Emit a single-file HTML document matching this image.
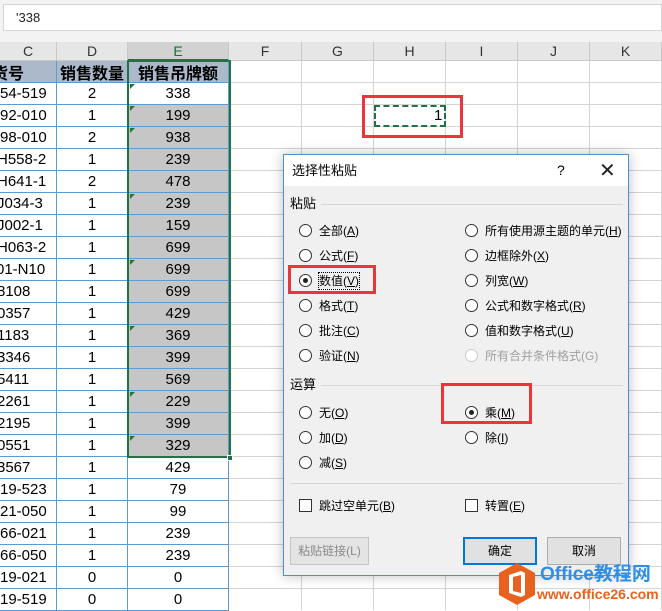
<!DOCTYPE html>
<html><head><meta charset="utf-8">
<style>
*{margin:0;padding:0;box-sizing:border-box}
body{width:662px;height:610px;overflow:hidden;background:#fff;position:relative;font-family:"Liberation Sans","Noto Sans CJK SC",sans-serif;color:#000}
.a{position:absolute}
.fb{left:0;top:0;width:662px;height:42px;background:#f3f3f3}
.fbox{left:3px;top:4px;width:659px;height:27px;background:#fff;border:1px solid #d4d4d4;font-size:13px;line-height:25px;padding-left:12px;color:#222}
.ch{top:42px;height:19px;background:#e6e6e6;border-right:1px solid #c8c8c8;border-bottom:1px solid #c8c8c8;font-size:14px;text-align:center;line-height:19px;color:#333}
.vl{top:61px;width:1px;height:549px;background:#d4d4d4}
.hl{left:229px;width:433px;height:1px;background:#d4d4d4}
.cell{height:22px;line-height:22px;font-size:15px;border-bottom:1px solid #5b9bd5;white-space:nowrap;overflow:hidden}
.c{left:0;width:57px;border-right:1px solid #5b9bd5}
.d{left:57px;width:71px;text-align:center;border-right:1px solid #5b9bd5}
.e{left:128px;width:101px;text-align:center;border-right:1px solid #5b9bd5}
.g{background:#c6c6c6}
.t{position:absolute;left:2px;top:1px;width:0;height:0;border-top:5px solid #1d7a2e;border-right:5px solid transparent}
.hdr{top:61px;height:22px;background:#acb9ca;font-weight:bold;font-size:16px;line-height:22px;border-bottom:1px solid #5b9bd5;border-right:1px solid #5b9bd5;white-space:nowrap;overflow:hidden;font-family:"Noto Sans CJK SC",sans-serif}
.dlg{left:283px;top:154px;width:346px;height:422px;background:#f0f0f0;border:1px solid #4a90d9;box-shadow:0 0 12px rgba(0,0,0,.25);font-size:12px;font-family:"Liberation Sans","Noto Sans CJK SC",sans-serif}
.r{width:13px;height:13px;border:1px solid #333;border-radius:50%;background:#fff}
.r.on::after{content:"";position:absolute;left:3px;top:3px;width:5px;height:5px;border-radius:50%;background:#222}
.cb{width:13px;height:13px;border:1px solid #333;background:#fff}
.lb{font-size:12px;line-height:16px;white-space:nowrap}
u{text-decoration:underline}
.btn{height:28px;border:1px solid #adadad;background:#e1e1e1;text-align:center;line-height:26px;font-size:12px}
</style></head><body>
<div class="a fb"></div>
<div class="a fbox">'338</div>
<div class="a ch" style="left:0;width:57px">C</div>
<div class="a ch" style="left:57px;width:71px">D</div>
<div class="a ch" style="left:128px;width:101px;background:#d2d2d2;color:#1d6b3a;border-bottom:2px solid #217346">E</div>
<div class="a ch" style="left:229px;width:73px">F</div>
<div class="a ch" style="left:302px;width:72px">G</div>
<div class="a ch" style="left:374px;width:72px">H</div>
<div class="a ch" style="left:446px;width:72px">I</div>
<div class="a ch" style="left:518px;width:72px">J</div>
<div class="a ch" style="left:590px;width:72px">K</div>
<div class="a vl" style="left:301px"></div><div class="a vl" style="left:373px"></div><div class="a vl" style="left:445px"></div><div class="a vl" style="left:517px"></div><div class="a vl" style="left:589px"></div><div class="a vl" style="left:661px"></div>
<div class="a hl" style="top:82px"></div><div class="a hl" style="top:104px"></div><div class="a hl" style="top:126px"></div><div class="a hl" style="top:148px"></div><div class="a hl" style="top:170px"></div><div class="a hl" style="top:192px"></div><div class="a hl" style="top:214px"></div><div class="a hl" style="top:236px"></div><div class="a hl" style="top:258px"></div><div class="a hl" style="top:280px"></div><div class="a hl" style="top:302px"></div><div class="a hl" style="top:324px"></div><div class="a hl" style="top:346px"></div><div class="a hl" style="top:368px"></div><div class="a hl" style="top:390px"></div><div class="a hl" style="top:412px"></div><div class="a hl" style="top:434px"></div><div class="a hl" style="top:456px"></div><div class="a hl" style="top:478px"></div><div class="a hl" style="top:500px"></div><div class="a hl" style="top:522px"></div><div class="a hl" style="top:544px"></div><div class="a hl" style="top:566px"></div><div class="a hl" style="top:588px"></div>

<div class="a hdr" style="left:0;width:57px;text-indent:-8px">货号</div>
<div class="a hdr" style="left:57px;width:71px;text-align:center">销售数量</div>
<div class="a hdr" style="left:128px;width:101px;text-align:center">销售吊牌额</div>

<div class="a" style="left:0;top:83px;width:229px">
<div style="position:relative;height:22px"><div class="a cell c">54-519</div><div class="a cell d">2</div><div class="a cell e"><i class="t"></i>338</div></div>
<div style="position:relative;height:22px"><div class="a cell c">92-010</div><div class="a cell d">1</div><div class="a cell e g"><i class="t"></i>199</div></div>
<div style="position:relative;height:22px"><div class="a cell c">98-010</div><div class="a cell d">2</div><div class="a cell e g"><i class="t"></i>938</div></div>
<div style="position:relative;height:22px"><div class="a cell c" style="text-indent:-3px">H558-2</div><div class="a cell d">1</div><div class="a cell e g">239</div></div>
<div style="position:relative;height:22px"><div class="a cell c" style="text-indent:-3px">H641-1</div><div class="a cell d">2</div><div class="a cell e g">478</div></div>
<div style="position:relative;height:22px"><div class="a cell c" style="text-indent:-3px">J034-3</div><div class="a cell d">1</div><div class="a cell e g"><i class="t"></i>239</div></div>
<div style="position:relative;height:22px"><div class="a cell c" style="text-indent:-3px">J002-1</div><div class="a cell d">1</div><div class="a cell e g">159</div></div>
<div style="position:relative;height:22px"><div class="a cell c" style="text-indent:-3px">H063-2</div><div class="a cell d">1</div><div class="a cell e g">699</div></div>
<div style="position:relative;height:22px"><div class="a cell c" style="text-indent:-4px">01-N10</div><div class="a cell d">1</div><div class="a cell e g"><i class="t"></i>699</div></div>
<div style="position:relative;height:22px"><div class="a cell c" style="text-indent:-3px">8108</div><div class="a cell d">1</div><div class="a cell e g">699</div></div>
<div style="position:relative;height:22px"><div class="a cell c" style="text-indent:-3px">0357</div><div class="a cell d">1</div><div class="a cell e g">429</div></div>
<div style="position:relative;height:22px"><div class="a cell c" style="text-indent:-3px">1183</div><div class="a cell d">1</div><div class="a cell e g"><i class="t"></i>369</div></div>
<div style="position:relative;height:22px"><div class="a cell c" style="text-indent:-3px">3346</div><div class="a cell d">1</div><div class="a cell e g">399</div></div>
<div style="position:relative;height:22px"><div class="a cell c" style="text-indent:-3px">5411</div><div class="a cell d">1</div><div class="a cell e g">569</div></div>
<div style="position:relative;height:22px"><div class="a cell c" style="text-indent:-3px">2261</div><div class="a cell d">1</div><div class="a cell e g"><i class="t"></i>229</div></div>
<div style="position:relative;height:22px"><div class="a cell c" style="text-indent:-3px">2195</div><div class="a cell d">1</div><div class="a cell e g">399</div></div>
<div style="position:relative;height:22px"><div class="a cell c" style="text-indent:-3px">0551</div><div class="a cell d">1</div><div class="a cell e g"><i class="t"></i>329</div></div>
<div style="position:relative;height:22px"><div class="a cell c" style="text-indent:-3px">3567</div><div class="a cell d">1</div><div class="a cell e">429</div></div>
<div style="position:relative;height:22px"><div class="a cell c">19-523</div><div class="a cell d">1</div><div class="a cell e">79</div></div>
<div style="position:relative;height:22px"><div class="a cell c">21-050</div><div class="a cell d">1</div><div class="a cell e">99</div></div>
<div style="position:relative;height:22px"><div class="a cell c">66-021</div><div class="a cell d">1</div><div class="a cell e">239</div></div>
<div style="position:relative;height:22px"><div class="a cell c">66-050</div><div class="a cell d">1</div><div class="a cell e">239</div></div>
<div style="position:relative;height:22px"><div class="a cell c">19-021</div><div class="a cell d">0</div><div class="a cell e">0</div></div>
<div style="position:relative;height:22px"><div class="a cell c">19-519</div><div class="a cell d">0</div><div class="a cell e">0</div></div>
</div>
<div class="a" style="left:127px;top:60px;width:104px;height:398px;border:2px solid #217346"></div>
<div class="a" style="left:227px;top:455px;width:6px;height:6px;background:#217346;border:1px solid #fff"></div>

<div class="a" style="left:374px;top:105px;width:72px;height:22px;border:2px dashed #217346"></div>
<div class="a" style="left:434px;top:106px;font-size:15px;line-height:20px">1</div>
<div class="a" style="left:362px;top:95px;width:101px;height:43px;border:3px solid #e8363d"></div>

<div class="a dlg">
 <div class="a" style="left:0;top:0;width:344px;height:31px;background:#fff"></div>
 <div class="a lb" style="left:8px;top:8px;font-size:13px">选择性粘贴</div>
 <div class="a" style="left:273px;top:7px;font-size:14px">?</div>
 <div class="a" style="left:315px;top:3px;font-size:20px;font-weight:300;color:#222">✕</div>
 <div class="a lb" style="left:6px;top:41px;font-size:13px">粘贴</div>
 <div class="a" style="left:37px;top:49px;width:302px;height:1px;background:#d6d6d6"></div>

 <div class="a r" style="left:15px;top:69px"></div><div class="a lb" style="left:35px;top:68px">全部(<u>A</u>)</div>
 <div class="a r" style="left:15px;top:94px"></div><div class="a lb" style="left:35px;top:93px">公式(<u>F</u>)</div>
 <div class="a r on" style="left:15px;top:119px"></div><div class="a lb" style="left:35px;top:118px;outline:1px dotted #000">数值(<u>V</u>)</div>
 <div class="a r" style="left:15px;top:144px"></div><div class="a lb" style="left:35px;top:143px">格式(<u>T</u>)</div>
 <div class="a r" style="left:15px;top:169px"></div><div class="a lb" style="left:35px;top:168px">批注(<u>C</u>)</div>
 <div class="a r" style="left:15px;top:194px"></div><div class="a lb" style="left:35px;top:193px">验证(<u>N</u>)</div>

 <div class="a r" style="left:181px;top:69px"></div><div class="a lb" style="left:201px;top:68px">所有使用源主题的单元(<u>H</u>)</div>
 <div class="a r" style="left:181px;top:94px"></div><div class="a lb" style="left:201px;top:93px">边框除外(<u>X</u>)</div>
 <div class="a r" style="left:181px;top:119px"></div><div class="a lb" style="left:201px;top:118px">列宽(<u>W</u>)</div>
 <div class="a r" style="left:181px;top:144px"></div><div class="a lb" style="left:201px;top:143px">公式和数字格式(<u>R</u>)</div>
 <div class="a r" style="left:181px;top:169px"></div><div class="a lb" style="left:201px;top:168px">值和数字格式(<u>U</u>)</div>
 <div class="a r" style="left:181px;top:194px;border-color:#ccc"></div><div class="a lb" style="left:201px;top:193px;color:#a0a0a0">所有合并条件格式(G)</div>

 <div class="a" style="left:4px;top:110px;width:88px;height:29px;border:3px solid #e8363d"></div>

 <div class="a lb" style="left:6px;top:222px;font-size:13px">运算</div>
 <div class="a" style="left:37px;top:230px;width:302px;height:1px;background:#d6d6d6"></div>
 <div class="a r" style="left:15px;top:251px"></div><div class="a lb" style="left:35px;top:250px">无(<u>O</u>)</div>
 <div class="a r" style="left:15px;top:276px"></div><div class="a lb" style="left:35px;top:275px">加(<u>D</u>)</div>
 <div class="a r" style="left:15px;top:301px"></div><div class="a lb" style="left:35px;top:300px">减(<u>S</u>)</div>
 <div class="a r on" style="left:181px;top:251px"></div><div class="a lb" style="left:201px;top:250px">乘(<u>M</u>)</div>
 <div class="a r" style="left:181px;top:276px"></div><div class="a lb" style="left:201px;top:275px">除(<u>I</u>)</div>
 <div class="a" style="left:157px;top:228px;width:91px;height:41px;border:3px solid #e8363d"></div>

 <div class="a" style="left:6px;top:328px;width:333px;height:1px;background:#d6d6d6"></div>
 <div class="a cb" style="left:15px;top:344px"></div><div class="a lb" style="left:35px;top:343px">跳过空单元(<u>B</u>)</div>
 <div class="a cb" style="left:181px;top:344px"></div><div class="a lb" style="left:201px;top:343px">转置(<u>E</u>)</div>

 <div class="a btn" style="left:6px;top:382px;width:79px;color:#8a8a8a;background:#e4e4e4;border-color:#c4c4c4">粘贴链接(L)</div>
 <div class="a btn" style="left:179px;top:382px;width:74px;border:2px solid #0078d7;line-height:24px">确定</div>
 <div class="a btn" style="left:263px;top:382px;width:74px">取消</div>
</div>

<svg class="a" style="left:497px;top:562px" width="40" height="44" viewBox="0 0 40 44">
 <polygon points="20,1 38,11 38,33 20,43 2,33 2,11" fill="#e8611e"/>
 <path d="M12 13 L24 9 L28 11 L28 33 L24 35 L12 31 Z M16 15 L16 29 L24 31 L24 13 Z" fill="#fff" fill-rule="evenodd"/>
</svg>
<div class="a" style="left:540px;top:564px;font-size:19px;font-weight:bold;color:#2f8fe6;white-space:nowrap;font-family:'Liberation Sans','Noto Sans CJK SC',sans-serif;line-height:22px">Office教程网</div>
<div class="a" style="left:537px;top:586px;font-size:14px;font-weight:bold;color:#e8611e;white-space:nowrap;line-height:16px">www.office26.com</div>
</body></html>
